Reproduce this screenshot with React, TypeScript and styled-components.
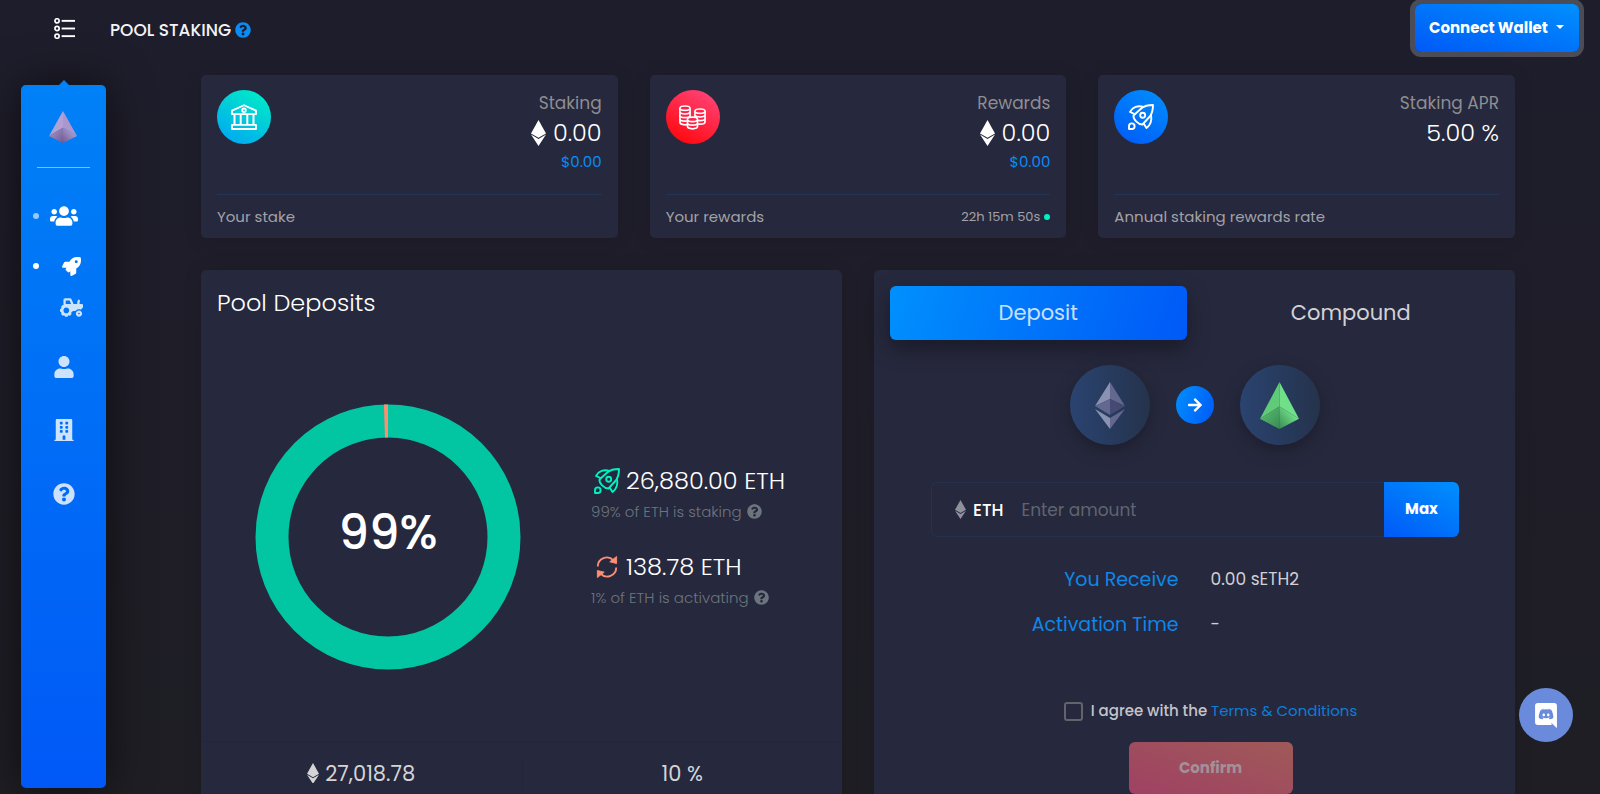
import React, { useState } from "react";
import styled, { createGlobalStyle, css } from "styled-components";
import {
  FaArrowRight,
  FaBuilding,
  FaQuestionCircle,
  FaRocket,
  FaTractor,
  FaUser,
  FaUsers,
} from "react-icons/fa";

const GlobalStyle = createGlobalStyle`
  *, *::before, *::after { box-sizing: border-box; }
  body {
    margin: 0;
    font-family: Poppins, Inter, sans-serif;
    background: #1e1e24;
    color: #fff;
  }
  button, input { font-family: inherit; }
  svg { display: block; flex: none; }
`;

const primary = "#0a8cf5";
const mint = "#00f2c3";
const coral = "#ff8d72";

/* ---------- page frame ---------- */

const Shell = styled.div`
  display: flex;
  flex-direction: column;
  height: 100vh;
  overflow: hidden;
  background: linear-gradient(#1e1d2c, #1e1e24);
`;

const Header = styled.header`
  display: flex;
  align-items: center;
  flex: none;
  height: 60px;
  padding: 0 21px 0 54px;
`;

const MenuButton = styled.button`
  padding: 0 0 3px;
  border: 0;
  background: none;
  color: #fff;
  margin-right: 35px;
  cursor: pointer;
`;

const PageTitle = styled.h1`
  display: flex;
  align-items: center;
  gap: 4px;
  margin: 0 auto 0 0;
  font-size: 17px;
  line-height: 24px;
  font-weight: 500;
  white-space: nowrap;
  color: #f4f4f6;

  svg { color: ${primary}; }
`;

const WalletButton = styled.button`
  display: flex;
  align-items: center;
  justify-content: space-between;
  align-self: flex-start;
  width: 164px;
  height: 48px;
  margin-top: 4px;
  padding: 0 15px 2px 14px;
  border: 0;
  border-radius: 6px;
  background: linear-gradient(15deg, #0059f7, #0090fd);
  box-shadow: 0 0 0 5px #4c4c57;
  color: #fff;
  font-size: 15px;
  font-weight: 700;
  white-space: nowrap;
  cursor: pointer;
`;

const Caret = styled.span`
  border: 4px solid transparent;
  border-top-color: #fff;
  border-bottom: 0;
`;

const Body = styled.div`
  display: flex;
  flex: 1;
  min-height: 0;
`;

/* ---------- side bar ---------- */

const Sidebar = styled.nav`
  position: relative;
  display: flex;
  flex-direction: column;
  align-items: center;
  flex: none;
  width: 85px;
  margin: 25px 0 6px 21px;
  border-radius: 5px;
  background: linear-gradient(#0081f6, #0059f7);
  box-shadow: 0 0 45px rgba(0, 0, 0, 0.6);

  &::before {
    content: "";
    position: absolute;
    top: -5px;
    left: 50%;
    margin-left: -5px;
    border: 5px solid transparent;
    border-top: 0;
    border-bottom-color: #0081f6;
  }
`;

const SideLogo = styled.a`
  margin-top: 26px;
  padding-right: 2px;
`;

const SideRule = styled.hr`
  width: 53px;
  height: 1px;
  margin: 24px 0 22px;
  border: 0;
  background: rgba(255, 255, 255, 0.5);
`;

const SideLink = styled.a<{ $active?: boolean; $height: number; $nested?: boolean }>`
  position: relative;
  display: flex;
  align-items: center;
  justify-content: center;
  width: 100%;
  height: ${(p) => p.$height}px;
  padding-left: ${(p) => (p.$nested ? 16 : 0)}px;
  color: ${(p) => (p.$active ? "#fff" : "rgba(255, 255, 255, 0.8)")};
`;

const Bullet = styled.span<{ $dim?: boolean }>`
  position: absolute;
  left: 12px;
  width: 6px;
  height: 6px;
  border-radius: 50%;
  background: ${(p) => (p.$dim ? "#93c9fb" : "#fff")};
`;

/* ---------- panels ---------- */

const Main = styled.main`
  flex: 1;
  min-width: 0;
  padding: 15px 85px 32px 95px;
  overflow: auto;
  scrollbar-width: none;
`;

const StatGrid = styled.div`
  display: grid;
  grid-template-columns: repeat(3, minmax(0, 1fr));
  gap: 32px;
  margin-bottom: 32px;
`;

const PanelGrid = styled.div`
  display: grid;
  grid-template-columns: repeat(2, minmax(0, 1fr));
  gap: 32px;
`;

const Card = styled.section`
  border-radius: 5px;
  background: #26283d;
  box-shadow: 0 1px 20px rgba(0, 0, 0, 0.1);
`;

const StatCard = styled(Card)`
  padding: 15px 16px 0;
`;

const StatTop = styled.div`
  display: flex;
  justify-content: space-between;
  min-height: 104px;
`;

const StatBadge = styled.div<{ $from: string; $to: string }>`
  display: flex;
  align-items: center;
  justify-content: center;
  flex: none;
  width: 54px;
  height: 54px;
  border-radius: 50%;
  background: linear-gradient(30deg, ${(p) => p.$from}, ${(p) => p.$to});
`;

const StatText = styled.div`
  text-align: right;
`;

const StatLabel = styled.div`
  font-size: 17px;
  line-height: 27px;
  color: #8e8e92;
`;

const StatValue = styled.div`
  display: flex;
  align-items: center;
  justify-content: flex-end;
  gap: 7px;
  font-size: 24px;
  line-height: 31px;
  font-weight: 300;
`;

const StatFiat = styled.div`
  font-size: 15px;
  line-height: 27px;
  color: ${primary};
`;

const StatFoot = styled.div`
  display: flex;
  align-items: center;
  justify-content: space-between;
  height: 44px;
  border-top: 1px solid #243554;
  font-size: 15px;
  color: #a2a2a8;
`;

const Countdown = styled.span`
  display: flex;
  align-items: center;
  gap: 4px;
  font-size: 13px;

  &::after {
    content: "";
    width: 6px;
    height: 6px;
    border-radius: 50%;
    background: ${mint};
  }
`;

const PanelTitle = styled.h2`
  margin: 0;
  padding: 18px 16px 0;
  font-size: 24px;
  line-height: 30px;
  font-weight: 300;
`;

const ChartRow = styled.div`
  display: flex;
  align-items: center;
  gap: 70px;
  padding: 86px 0 71px 54px;
`;

const Donut = styled.div`
  display: grid;
  place-items: center;
  flex: none;

  > * { grid-area: 1 / 1; }
`;

const DonutLabel = styled.div`
  padding-bottom: 9px;
  font-size: 48px;
  line-height: 58px;
  font-weight: 500;
`;

const Breakdown = styled.div`
  display: grid;
  gap: 24px;
  padding-top: 5px;
  white-space: nowrap;
`;

const Amount = styled.div`
  display: flex;
  align-items: center;
  gap: 6px;
  padding-left: 3px;
  font-size: 24px;
  line-height: 30px;
  font-weight: 300;
`;

const Share = styled.div`
  display: flex;
  align-items: center;
  gap: 5px;
  font-size: 15px;
  line-height: 32px;
  font-weight: 300;
  color: #6c757d;
`;

const Totals = styled.div`
  display: grid;
  grid-template-columns: repeat(2, 1fr);
  padding: 14px 0 16px;
  border-top: 1px solid #242539;
`;

const Total = styled.div`
  display: flex;
  align-items: center;
  justify-content: center;
  gap: 6px;
  height: 34px;
  font-size: 21px;
  color: #d4d4d8;

  & + & { border-left: 1px solid #242539; }
`;

/* ---------- deposit form ---------- */

const DepositCard = styled(Card)`
  padding: 16px;
`;

const Tabs = styled.div`
  display: grid;
  grid-template-columns: 1fr 1fr;
  gap: 16px;
`;

const Tab = styled.button<{ $active?: boolean }>`
  height: 54px;
  padding: 0 0 2px;
  border: 0;
  border-radius: 6px;
  background: none;
  color: #d2d2d6;
  font-size: 21px;
  cursor: pointer;

  ${(p) =>
    p.$active &&
    css`
      background: linear-gradient(110deg, #0090fd, #0059f7);
      box-shadow: 0 9px 22px rgba(0, 0, 0, 0.35);
      color: #c8e0ff;
    `}
`;

const Swap = styled.div`
  display: flex;
  align-items: center;
  justify-content: center;
  gap: 26px;
  margin: 25px 0 37px;
`;

const Token = styled.div`
  display: grid;
  place-items: center;
  width: 80px;
  height: 80px;
  border-radius: 50%;
  background: linear-gradient(90deg, #2a4370, #25334c);
  box-shadow: 0 6px 18px rgba(0, 0, 0, 0.25);
`;

const SwapArrow = styled.div`
  display: grid;
  place-items: center;
  width: 38px;
  height: 38px;
  border-radius: 50%;
  background: linear-gradient(110deg, #0090fd, #0059f7);
`;

const AmountField = styled.div`
  display: flex;
  height: 55px;
  margin: 0 40px 20px 41px;
`;

const FieldBox = styled.div`
  display: flex;
  align-items: center;
  flex: 1;
  min-width: 0;
  padding-left: 23px;
  border: 1px solid #263150;
  border-right: 0;
  border-radius: 6px 0 0 6px;
`;

const FieldLabel = styled.label`
  display: flex;
  align-items: center;
  gap: 7px;
  margin-right: 18px;
  font-size: 17px;
  font-weight: 500;
`;

const FieldInput = styled.input`
  flex: 1;
  min-width: 0;
  padding: 0;
  border: 0;
  outline: 0;
  background: none;
  color: #fff;
  font-size: 17px;

  &::placeholder { color: #5f6570; opacity: 1; }
`;

const MaxButton = styled.button`
  width: 75px;
  padding: 0 0 2px;
  border: 0;
  border-radius: 0 6px 6px 0;
  background: linear-gradient(30deg, #0059f7, #0090fd);
  color: #fff;
  font-size: 15px;
  font-weight: 700;
  cursor: pointer;
`;

const Summary = styled.dl`
  display: grid;
  grid-template-columns: 1fr 1fr;
  column-gap: 32px;
  margin: 0 0 52px;
  line-height: 45px;
`;

const Term = styled.dt`
  text-align: right;
  font-size: 19px;
  color: #0d87e8;
`;

const Detail = styled.dd`
  margin: 0;
  font-size: 17px;
  color: #d0d0d4;
`;

const Consent = styled.div`
  display: flex;
  align-items: center;
  justify-content: center;
  gap: 8px;
  margin: 0 0 19px 32px;
  font-size: 15px;
  line-height: 24px;
  color: #c4c4ca;
`;

const Checkbox = styled.input`
  appearance: none;
  width: 19px;
  height: 19px;
  margin: 0;
  border: 2px solid #62636b;
  border-radius: 3px;

  &:checked { background: ${primary}; }
`;

const ConsentLabel = styled.label`
  font-weight: 500;
`;

const TermsLink = styled.a`
  color: #0d7dd8;
  font-weight: 400;
  text-decoration: none;
`;

const ConfirmRow = styled.div`
  padding-left: 32px;
`;

const ConfirmButton = styled.button`
  display: block;
  width: 164px;
  height: 52px;
  margin: 0 auto;
  padding: 0 0 2px;
  border: 0;
  border-radius: 6px;
  background: linear-gradient(20deg, #9f4164, #9f5a58);
  color: #a39098;
  font-size: 15px;
  font-weight: 700;
`;

const DiscordButton = styled.a`
  position: fixed;
  right: 27px;
  bottom: 52px;
  display: grid;
  place-items: center;
  width: 54px;
  height: 54px;
  border-radius: 50%;
  background: #6a8bdc;
  color: #fff;
`;

/* ---------- drawings ---------- */

const EtherMark = ({ width, color = "#fff" }: { width: number; color?: string }) => (
  <svg width={width} height={(width * 26) / 15} viewBox="0 0 15 26" fill={color}>
    <path d="M7.500 0L15 13.400 7.500 17.800 0 13.400z" />
    <path d="M0 14.600l7.500 4.400 7.500-4.400L7.500 26z" />
  </svg>
);

const ListIcon = () => (
  <svg width="21" height="21" viewBox="0 0 22 22" fill="none" stroke="currentColor" strokeWidth="2">
    {[3, 11, 19].map((y) => (
      <g key={y}>
        <circle cx="3.200" cy={y} r="2.200" strokeWidth="1.800" />
        <path d={`M8 ${y}h14`} />
      </g>
    ))}
  </svg>
);

const BankIcon = () => (
  <svg width="26" height="26" viewBox="0 0 26 26" fill="none" stroke="#fff" strokeWidth="1.800" strokeLinejoin="round">
    <path d="M1 6.600L13 1.200l12 5.400v3.600H1z" />
    <circle cx="13" cy="6.300" r="1.800" />
    <path d="M3.500 10.500v10M9.700 10.500v10M16.300 10.500v10M22.500 10.500v10" strokeWidth="2" />
    <path d="M1 20.800h24v4.200H1z" />
  </svg>
);

const CoinStack = ({ x, y, rows }: { x: number; y: number; rows: number }) => (
  <g transform={`translate(${x} ${y})`}>
    <path
      d={`M0 2.200C0 1 2.200 0 5 0s5 1 5 2.200v${rows * 3.6}c0 1.200-2.200 2.200-5 2.200s-5-1-5-2.200z`}
    />
    {Array.from({ length: rows }, (_, i) => (
      <path key={i} d={`M0 ${2.2 + i * 3.6}c0 1.200 2.200 2.200 5 2.200s5-1 5-2.200`} />
    ))}
  </g>
);

const CoinsIcon = () => (
  <svg width="27" height="25" viewBox="0 0 27 25" fill="#ff2045" stroke="#fff" strokeWidth="1.700">
    <CoinStack x={1} y={1} rows={4} />
    <CoinStack x={16} y={4} rows={3} />
    <CoinStack x={8.5} y={12.2} rows={2} />
  </svg>
);

const RocketIcon = ({ size, color }: { size: number; color: string }) => (
  <svg
    width={size}
    height={size}
    viewBox="0 0 26 26"
    fill="none"
    stroke={color}
    strokeWidth="1.900"
    strokeLinejoin="round"
    strokeLinecap="round"
  >
    <path d="M25 1c-4.500 0-8.500.8-11.500 3.200L5.500 11.500c-.6 3.500 4.500 9 9 9l7.300-8C24.200 9.500 25 5.500 25 1z" />
    <path d="M15.500 3C10 1.200 4.500 3 2 8l4.800 2.200M23 10.500c1 5.500-.5 10.500-4.500 13.500l-2.700-4.200" />
    <circle cx="14.700" cy="11.300" r="2.500" />
    <path d="M1 25v-2.800a2.800 2.800 0 1 1 2.800 2.800z" />
  </svg>
);

const RefreshIcon = () => (
  <svg width="26" height="24" viewBox="-2 -1 28 26" fill="none" stroke={coral} strokeWidth="2">
    <path d="M2 11.500A9.800 9.800 0 0 1 19 4.800M22 12.500A9.800 9.800 0 0 1 5 19.200" />
    <path d="M22.400.6v7.600l-7.400-1.800zM1.600 23.400v-7.600l7.400 1.800z" fill={coral} strokeWidth="1" />
  </svg>
);

const Pyramid = ({
  id,
  width,
  height,
  left,
  right,
  dark,
}: {
  id: string;
  width: number;
  height: number;
  left: string;
  right: string;
  dark: string;
}) => (
  <svg width={width} height={height} viewBox="0 0 40 46" preserveAspectRatio="none">
    <defs>
      <linearGradient id={`${id}-l`} x1="0" y1="0" x2="1" y2="1">
        <stop offset="0.200" stopColor={left} />
        <stop offset="1" stopColor={dark} />
      </linearGradient>
      <linearGradient id={`${id}-r`} x1="1" y1="0" x2="0" y2="1">
        <stop offset="0.300" stopColor={right} />
        <stop offset="1" stopColor={dark} />
      </linearGradient>
    </defs>
    <path d="M20 0L0 36l20-12z" fill={left} />
    <path d="M20 0l20 36-20-12z" fill={right} />
    <path d="M0 36l20-12v22z" fill={dark} />
    <path d="M0 36l20-12v22z" fill={`url(#${id}-l)`} opacity="0.700" />
    <path d="M40 36L20 24v22z" fill={`url(#${id}-r)`} />
  </svg>
);

const EtherGem = () => (
  <svg width="30" height="47" viewBox="0 0 30 47">
    <path d="M15 0L0 24l15-7z" fill="#8a92b2" />
    <path d="M15 0l15 24-15-7z" fill="#62688f" />
    <path d="M0 24l15-7v16z" fill="#62688f" />
    <path d="M30 24l-15-7v16z" fill="#454a75" />
    <path d="M0 27l15 9v11z" fill="#8a92b2" />
    <path d="M30 27l-15 9v11z" fill="#62688f" />
  </svg>
);

const DiscordIcon = () => (
  <svg width="22" height="25" viewBox="0 0 448 512" fill="currentColor">
    <path d="M297.216 243.2c0 15.616-11.52 28.416-26.112 28.416-14.336 0-26.112-12.8-26.112-28.416s11.520-28.416 26.112-28.416c14.592 0 26.112 12.800 26.112 28.416zm-119.552-28.416c-14.592 0-26.112 12.800-26.112 28.416s11.776 28.416 26.112 28.416c14.592 0 26.112-12.800 26.112-28.416.256-15.616-11.520-28.416-26.112-28.416zM448 52.736V512c-64.494-56.994-43.868-38.128-118.784-107.776l13.568 47.360H52.480C23.552 451.584 0 428.032 0 398.848V52.736C0 23.552 23.552 0 52.480 0h343.040C424.448 0 448 23.552 448 52.736zm-72.960 242.688c0-82.432-36.864-149.248-36.864-149.248-36.864-27.648-71.936-26.880-71.936-26.880l-3.584 4.096c43.520 13.312 63.744 32.512 63.744 32.512-60.811-33.329-132.244-33.335-191.232-7.424-9.472 4.352-15.104 7.424-15.104 7.424s21.248-20.224 67.328-33.536l-2.560-3.072s-35.072-.768-71.936 26.880c0 0-36.864 66.816-36.864 149.248 0 0 21.504 37.120 78.080 38.912 0 0 9.472-11.520 17.152-21.248-32.512-9.728-44.800-30.208-44.800-30.208 3.766 2.636 9.976 6.053 10.496 6.400 43.210 24.198 104.588 32.126 159.744 8.960 8.960-3.328 18.944-8.192 29.440-15.104 0 0-12.800 20.992-46.336 30.464 7.680 9.728 16.896 20.736 16.896 20.736 56.576-1.792 78.336-38.912 78.336-38.912z" />
  </svg>
);

const DonutChart = ({ percent }: { percent: number }) => {
  const radius = 116;
  const length = 2 * Math.PI * radius;
  const rest = (length * (100 - percent)) / 100;
  return (
    <svg width="266" height="266" viewBox="0 0 266 266" fill="none" strokeWidth="33">
      <circle cx="133" cy="133" r={radius} stroke="#02c5a1" />
      <circle
        cx="133"
        cy="133"
        r={radius}
        stroke={coral}
        strokeDasharray={`${rest} ${length - rest}`}
        strokeDashoffset={rest}
        transform="rotate(-90 133 133)"
      />
    </svg>
  );
};

/* ---------- page ---------- */

export default function App() {
  const [tab, setTab] = useState("deposit");

  return (
    <>
      <GlobalStyle />
      <Shell>
        <Header>
          <MenuButton aria-label="Toggle menu">
            <ListIcon />
          </MenuButton>
          <PageTitle>
            POOL STAKING <FaQuestionCircle size={16} />
          </PageTitle>
          <WalletButton>
            Connect Wallet <Caret />
          </WalletButton>
        </Header>

        <Body>
          <Sidebar>
            <SideLogo href="#home" aria-label="Home">
              <Pyramid id="logo" width={28} height={32} left="#b3a1d6" right="#ab97cc" dark="#6d5c92" />
            </SideLogo>
            <SideRule />
            <SideLink href="#pool" aria-label="Pool" $active $height={52}>
              <Bullet $dim />
              <FaUsers size={28} />
            </SideLink>
            <SideLink href="#stake" aria-label="Stake" $active $nested $height={48}>
              <Bullet />
              <FaRocket size={19} />
            </SideLink>
            <SideLink href="#farm" aria-label="Farm" $nested $height={34}>
              <FaTractor size={23} />
            </SideLink>
            <SideLink href="#solo" aria-label="Solo" $height={85}>
              <FaUser size={22} />
            </SideLink>
            <SideLink href="#enterprise" aria-label="Enterprise" $height={42}>
              <FaBuilding size={22} />
            </SideLink>
            <SideLink href="#help" aria-label="Help" $height={86}>
              <FaQuestionCircle size={22} />
            </SideLink>
          </Sidebar>

          <Main>
            <StatGrid>
              <StatCard>
                <StatTop>
                  <StatBadge $from="#00a2f5" $to={mint}>
                    <BankIcon />
                  </StatBadge>
                  <StatText>
                    <StatLabel>Staking</StatLabel>
                    <StatValue>
                      <EtherMark width={15} />
                      0.00
                    </StatValue>
                    <StatFiat>$0.00</StatFiat>
                  </StatText>
                </StatTop>
                <StatFoot>Your stake</StatFoot>
              </StatCard>

              <StatCard>
                <StatTop>
                  <StatBadge $from="#ff0000" $to="#ff4a82">
                    <CoinsIcon />
                  </StatBadge>
                  <StatText>
                    <StatLabel>Rewards</StatLabel>
                    <StatValue>
                      <EtherMark width={15} />
                      0.00
                    </StatValue>
                    <StatFiat>$0.00</StatFiat>
                  </StatText>
                </StatTop>
                <StatFoot>
                  Your rewards
                  <Countdown>22h 15m 50s</Countdown>
                </StatFoot>
              </StatCard>

              <StatCard>
                <StatTop>
                  <StatBadge $from="#0059f7" $to="#0090fd">
                    <RocketIcon size={26} color="#fff" />
                  </StatBadge>
                  <StatText>
                    <StatLabel>Staking APR</StatLabel>
                    <StatValue>5.00 %</StatValue>
                  </StatText>
                </StatTop>
                <StatFoot>Annual staking rewards rate</StatFoot>
              </StatCard>
            </StatGrid>

            <PanelGrid>
              <Card>
                <PanelTitle>Pool Deposits</PanelTitle>
                <ChartRow>
                  <Donut>
                    <DonutChart percent={99.4} />
                    <DonutLabel>99%</DonutLabel>
                  </Donut>
                  <Breakdown>
                    <div>
                      <Amount>
                        <RocketIcon size={26} color={mint} />
                        26,880.00 ETH
                      </Amount>
                      <Share>
                        99% of ETH is staking <FaQuestionCircle size={15} />
                      </Share>
                    </div>
                    <div>
                      <Amount>
                        <RefreshIcon />
                        138.78 ETH
                      </Amount>
                      <Share>
                        1% of ETH is activating <FaQuestionCircle size={15} />
                      </Share>
                    </div>
                  </Breakdown>
                </ChartRow>
                <Totals>
                  <Total>
                    <EtherMark width={12} color="#d4d4d8" />
                    27,018.78
                  </Total>
                  <Total>10 %</Total>
                </Totals>
              </Card>

              <DepositCard>
                <Tabs role="tablist">
                  <Tab
                    role="tab"
                    aria-selected={tab === "deposit"}
                    $active={tab === "deposit"}
                    onClick={() => setTab("deposit")}
                  >
                    Deposit
                  </Tab>
                  <Tab
                    role="tab"
                    aria-selected={tab === "compound"}
                    $active={tab === "compound"}
                    onClick={() => setTab("compound")}
                  >
                    Compound
                  </Tab>
                </Tabs>

                <Swap>
                  <Token>
                    <EtherGem />
                  </Token>
                  <SwapArrow>
                    <FaArrowRight size={16} />
                  </SwapArrow>
                  <Token>
                    <Pyramid id="token" width={39} height={47} left="#5fcb79" right="#6fdf88" dark="#3a8a52" />
                  </Token>
                </Swap>

                <AmountField>
                  <FieldBox>
                    <FieldLabel htmlFor="amount">
                      <EtherMark width={11} color="#8f909b" />
                      ETH
                    </FieldLabel>
                    <FieldInput id="amount" placeholder="Enter amount" />
                  </FieldBox>
                  <MaxButton>Max</MaxButton>
                </AmountField>

                <Summary>
                  <Term>You Receive</Term>
                  <Detail>0.00 sETH2</Detail>
                  <Term>Activation Time</Term>
                  <Detail>-</Detail>
                </Summary>

                <Consent>
                  <Checkbox type="checkbox" id="agree" />
                  <ConsentLabel htmlFor="agree">
                    I agree with the <TermsLink href="#terms">Terms &amp; Conditions</TermsLink>
                  </ConsentLabel>
                </Consent>
                <ConfirmRow>
                  <ConfirmButton disabled>Confirm</ConfirmButton>
                </ConfirmRow>
              </DepositCard>
            </PanelGrid>
          </Main>
        </Body>

        <DiscordButton href="#discord" aria-label="Discord">
          <DiscordIcon />
        </DiscordButton>
      </Shell>
    </>
  );
}
